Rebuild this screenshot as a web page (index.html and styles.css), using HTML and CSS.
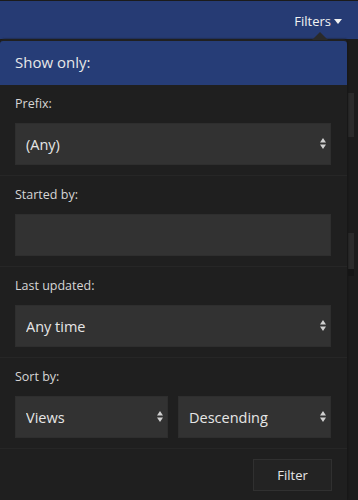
FILE: index.html
```html
<!DOCTYPE html>
<html>
<head>
<meta charset="utf-8">
<link rel="stylesheet" href="styles.css">
</head>
<body>
<header class="topbar">
  <button class="filters-toggle">Filters <span class="caret"></span></button>
</header>
<div class="page">
  <div class="popover">
    <span class="arrow"></span>
    <div class="pop-head">Show only:</div>
    <div class="section">
      <label class="label">Prefix:</label>
      <div class="select-wrap">
        <select class="control"><option>(Any)</option></select>
        <svg class="spin" width="6" height="11" viewBox="0 0 6 11"><path d="M3 0L6 4.5H0Z M3 11L0 6.5H6Z" fill="#d0d0d0"/></svg>
      </div>
    </div>
    <div class="section">
      <label class="label">Started by:</label>
      <input class="control" type="text">
    </div>
    <div class="section">
      <label class="label">Last updated:</label>
      <div class="select-wrap">
        <select class="control"><option>Any time</option></select>
        <svg class="spin" width="6" height="11" viewBox="0 0 6 11"><path d="M3 0L6 4.5H0Z M3 11L0 6.5H6Z" fill="#d0d0d0"/></svg>
      </div>
    </div>
    <div class="section">
      <label class="label">Sort by:</label>
      <div class="pair">
        <div class="select-wrap">
          <select class="control"><option>Views</option></select>
          <svg class="spin" width="6" height="11" viewBox="0 0 6 11"><path d="M3 0L6 4.5H0Z M3 11L0 6.5H6Z" fill="#d0d0d0"/></svg>
        </div>
        <div class="select-wrap">
          <select class="control"><option>Descending</option></select>
          <svg class="spin" width="6" height="11" viewBox="0 0 6 11"><path d="M3 0L6 4.5H0Z M3 11L0 6.5H6Z" fill="#d0d0d0"/></svg>
        </div>
      </div>
    </div>
    <div class="footer">
      <button class="btn">Filter</button>
    </div>
  </div>
  <div class="scroll-col">
    <div class="thumb t1"></div>
    <div class="thumb t2"></div>
  </div>
</div>
</body>
</html>
```
FILE: styles.css
```css
* { box-sizing: border-box; }
html, body {
  margin: 0;
  padding: 0;
  background: #1e1e1e;
  font-family: "Open Sans", "Noto Sans", sans-serif;
  color: #e0e0e0;
  height: 500px;
  overflow: hidden;
}
.topbar {
  height: 39px;
  border-top: 1px solid #1b1b1b;
  background: #263b74;
  display: flex;
  justify-content: flex-end;
  align-items: center;
  padding-right: 16px;
}
.filters-toggle {
  background: none;
  border: 0;
  padding: 0;
  color: #f2f2f2;
  font-family: inherit;
  font-size: 13px;
  display: flex;
  align-items: center;
  gap: 3px;
  margin-top: 2px;
}
.caret {
  width: 0;
  height: 0;
  border-left: 4px solid transparent;
  border-right: 4px solid transparent;
  border-top: 5px solid #f2f2f2;
}
.page {
  display: flex;
  height: 461px;
}
.popover {
  position: relative;
  width: 347px;
  background: #1f1f1f;
  border-top: 2px solid #202020;
  border-radius: 4px 4px 0 0;
  box-shadow: 1px 0 2px #161616;
}
.arrow {
  position: absolute;
  top: -9px;
  left: 312px;
  width: 0;
  height: 0;
  border-left: 8px solid transparent;
  border-right: 8px solid transparent;
  border-bottom: 8px solid #2a2a2a;
}
.pop-head {
  height: 44px;
  background: #263d77;
  padding-left: 15px;
  display: flex;
  align-items: center;
  font-size: 15px;
  color: #e8e8e8;
  border-radius: 3px 3px 0 0;
  padding-bottom: 2px;
}
.section {
  padding: 10px 16px 10px 15px;
  border-bottom: 1px solid #262626;
  display: flex;
  flex-direction: column;
  gap: 10px;
}
.label {
  font-size: 12.5px;
  line-height: 18px;
  color: #d6d6d6;
}
.control {
  display: block;
  width: 100%;
  height: 42px;
  background: #323232;
  border: 1px solid #2e2e2e;
  color: #e6e6e6;
  font-family: inherit;
  font-size: 14.5px;
  padding: 0 10px;
  appearance: none;
  -webkit-appearance: none;
  border-radius: 0;
  outline: none;
}
.select-wrap {
  position: relative;
}
.spin {
  position: absolute;
  right: 5px;
  top: 15px;
}
.pair {
  display: grid;
  grid-template-columns: 1fr 1fr;
  gap: 10px;
}
.footer {
  display: flex;
  justify-content: flex-end;
  padding: 10px 15px 0 15px;
}
.btn {
  width: 79px;
  height: 32px;
  background: #232323;
  border: 1px solid #303030;
  color: #e6e6e6;
  font-family: inherit;
  font-size: 13px;
}
.scroll-col {
  flex: 1;
  background: #1c1c1c;
  display: flex;
  flex-direction: column;
  padding-left: 1px;
}
.thumb {
  width: 6px;
  background: #2b2b2b;
}
.t1 {
  margin-top: 54px;
  height: 44px;
}
.t2 {
  margin-top: 96px;
  height: 43px;
  border-bottom: 7px solid #161616;
}
```
